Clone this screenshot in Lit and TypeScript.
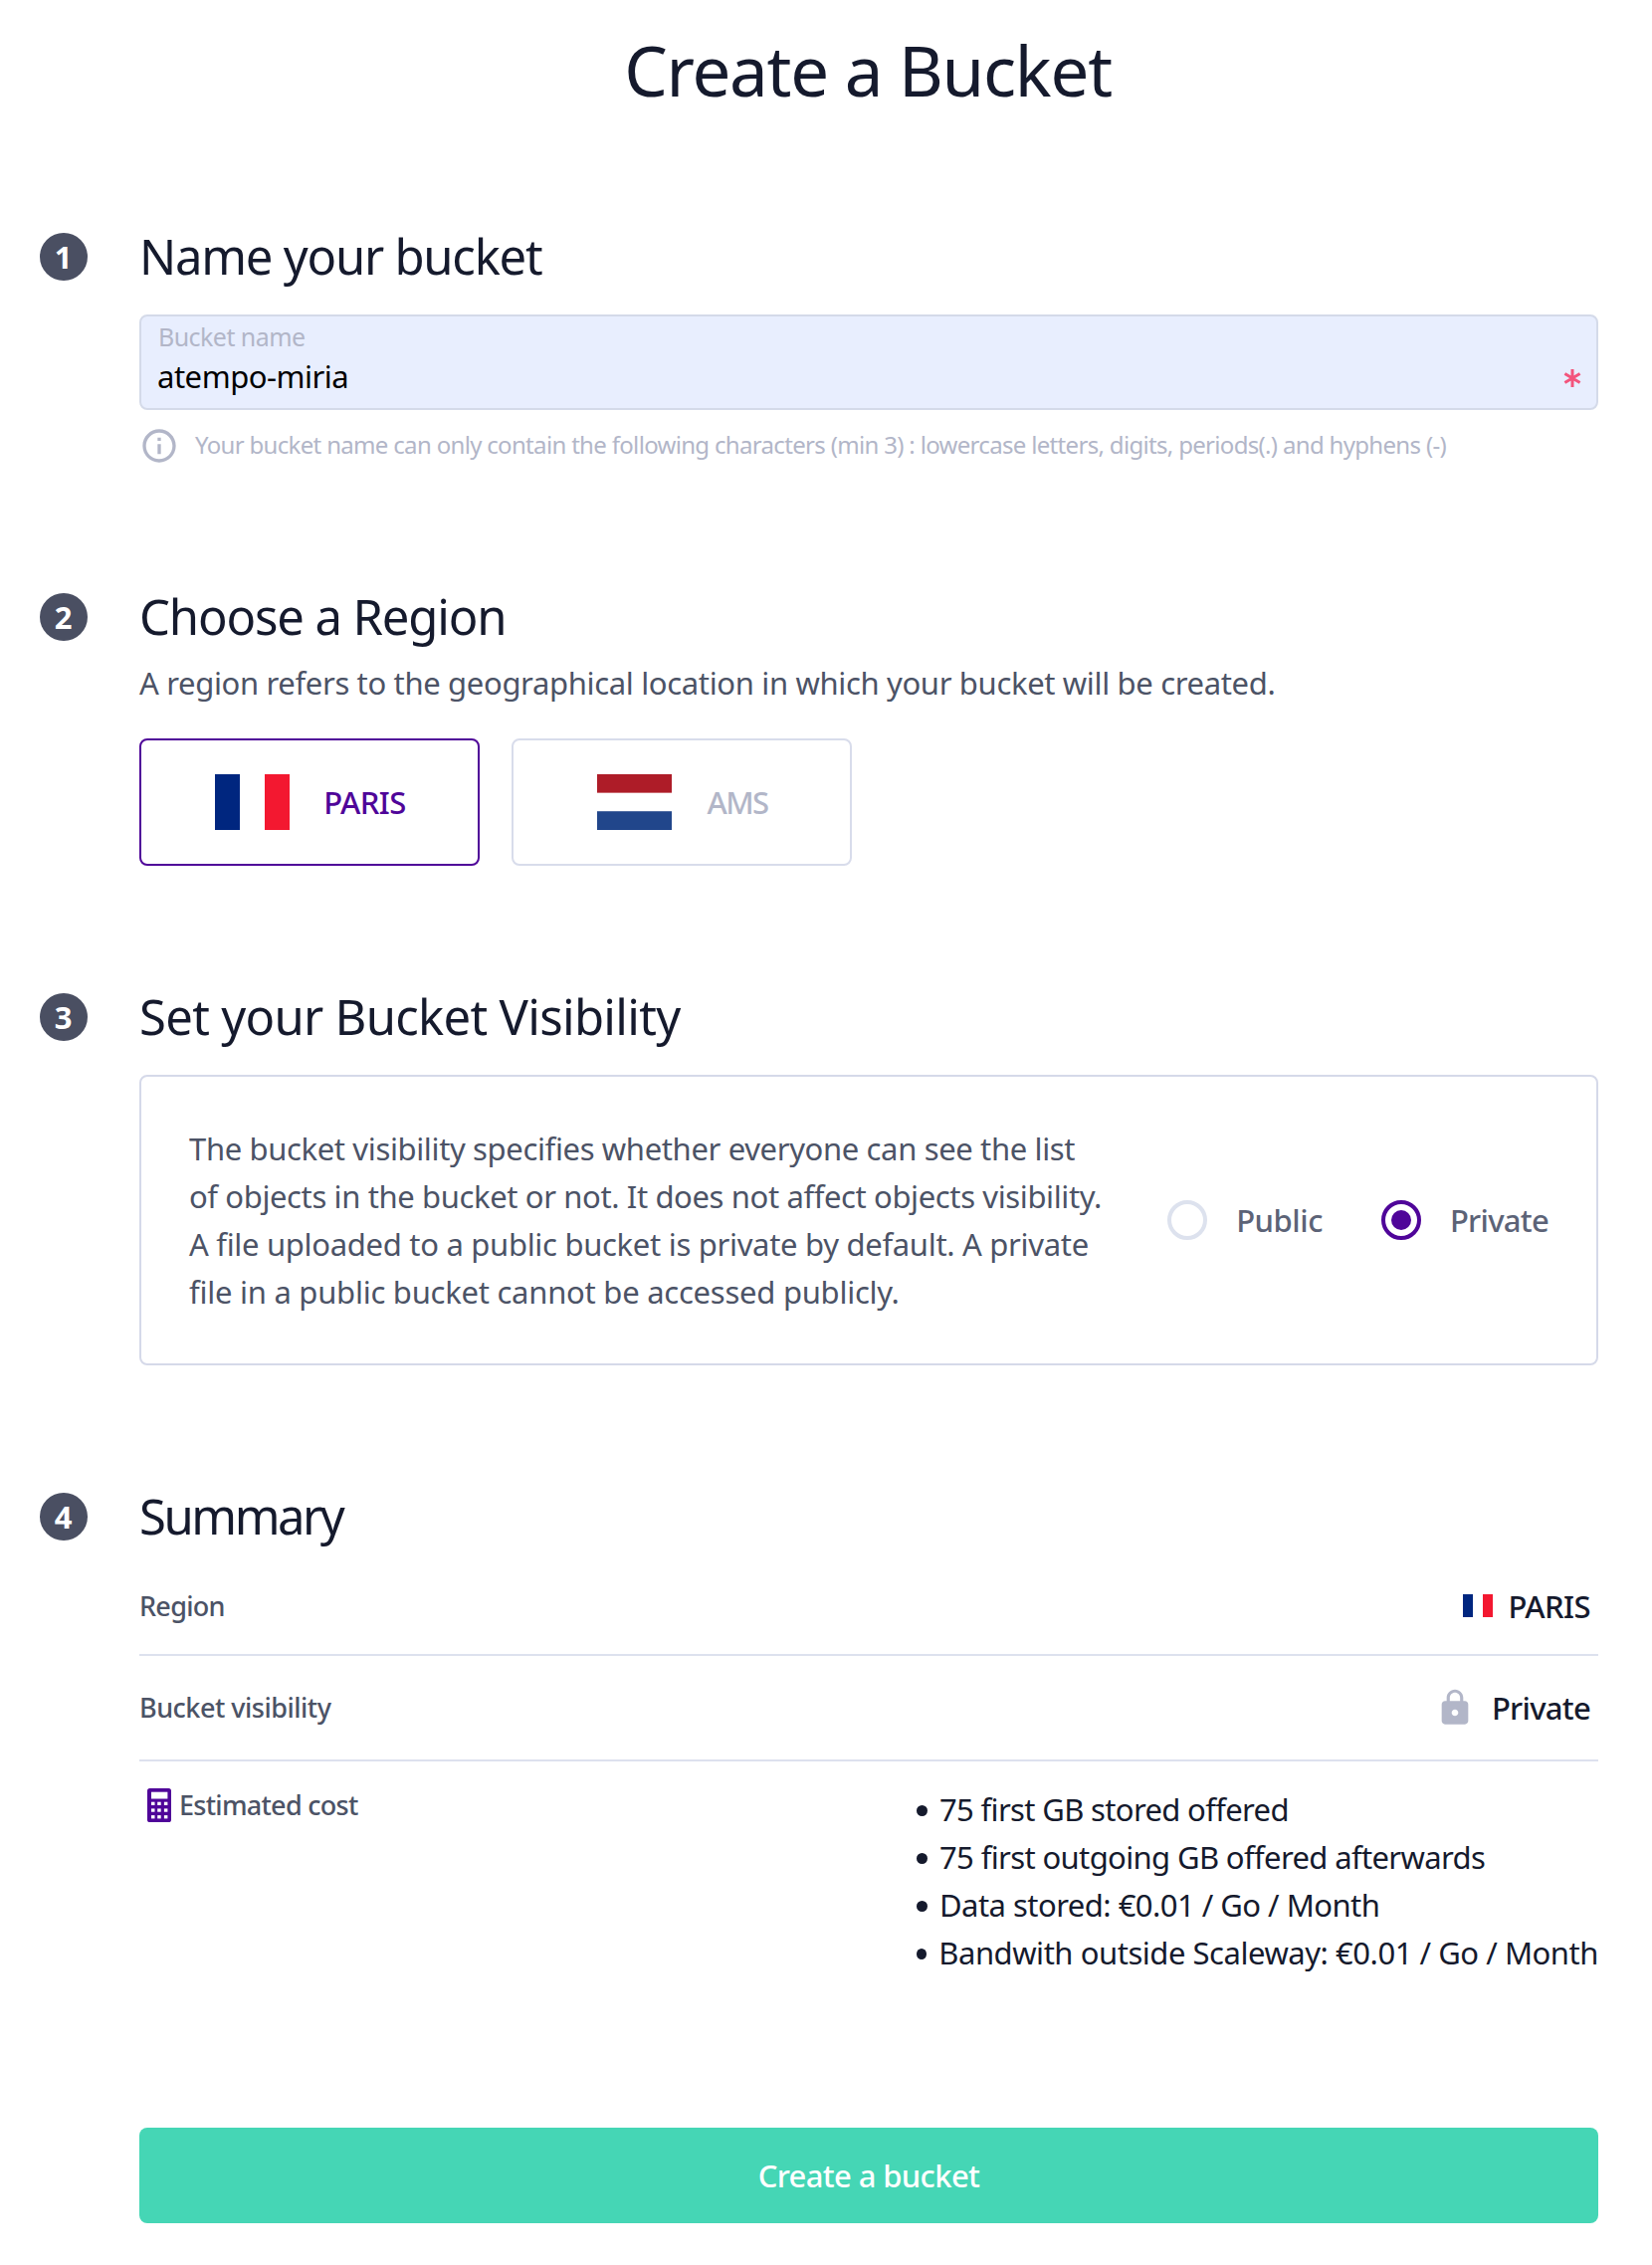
import { LitElement, html, css, svg } from 'lit';
import { customElement, property, state } from 'lit/decorators.js';
import { classMap } from 'lit/directives/class-map.js';

const flagFr = svg`<rect width="25" height="56" fill="#00267f"/><rect x="25" width="25" height="56" fill="#fff"/><rect x="50" width="25" height="56" fill="#f31830"/>`;
const flagNl = svg`<rect width="75" height="18.8" fill="#ae1c28"/><rect y="18.8" width="75" height="18.4" fill="#fff"/><rect y="37.2" width="75" height="18.8" fill="#21468b"/>`;

@customElement('form-step')
export class FormStep extends LitElement {
  @property({ type: Number }) step = 1;
  @property() heading = '';

  static styles = css`
    :host { display: grid; grid-template-columns: 100px 1fr; }
    .badge {
      display: flex; align-items: center; justify-content: center;
      width: 48px; height: 48px; margin-top: 7px; padding-right: 1px; border-radius: 50%; box-sizing: border-box;
      background: #4a4f62; color: #fff; font-size: 31px; font-weight: 700; line-height: 48px;
    }
    h2 { margin: 0; font-size: 49px; line-height: 60px; font-weight: 400; color: #151a2d; white-space: nowrap; }
    .h1 { letter-spacing: -1.24px; }
    .h2 { letter-spacing: -1.13px; }
    .h3 { letter-spacing: -0.7px; }
    .h4 { letter-spacing: -2.45px; }
  `;

  render() {
    return html`
      <div class="badge">${this.step}</div>
      <div>
        <h2 class="h${this.step}">${this.heading}</h2>
        <slot></slot>
      </div>`;
  }
}

@customElement('app-root')
export class AppRoot extends LitElement {
  @state() private region = 'PARIS';
  @state() private visibility = 'Private';

  static styles = css`
    :host {
      display: block; box-sizing: border-box; height: 2276px; padding: 24px 54px 0 40px;
      background: #fff; color: #4c5366;
      font-family: "Noto Sans", "Open Sans", sans-serif; font-size: 31px; line-height: 48px;
    }
    * { box-sizing: border-box; }
    svg { display: block; flex: none; }
    h1 {
      margin: 0 0 111px 98px; text-align: center; font-size: 69px; line-height: 92px;
      font-weight: 400; letter-spacing: -1.22px; color: #151a2d;
    }
    form-step { margin-bottom: 121px; }
    form-step:last-of-type { margin-bottom: 152px; }

    .field {
      height: 96px; margin-top: 29px; padding: 5px 15px 0 16px; border: 2px solid #d4dae9;
      border-radius: 8px; background: #e8eefe;
    }
    .label { padding-left: 1px; font-size: 25px; line-height: 30px; letter-spacing: -0.55px; color: #b2b6c8; }
    .entry { display: flex; justify-content: space-between; align-items: center; margin-top: 5px; }
    .value { line-height: 40px; letter-spacing: -0.48px; color: #000; }
    .required { margin-top: 4px; }
    .hint { display: flex; align-items: center; gap: 16px; height: 40px; margin-top: 16px; color: #b2b6c8; }
    .hint-text { padding-bottom: 2px; font-size: 24px; line-height: 34px; letter-spacing: -0.676px; white-space: nowrap; }

    .intro { margin: 13px 0 32px; letter-spacing: -0.343px; }
    .cards { display: flex; gap: 32px; }
    .card {
      display: flex; align-items: center; justify-content: center; gap: 34px;
      width: 342px; height: 128px; padding-left: 2px; border: 2px solid #d8dceb; border-radius: 8px;
      color: #b2b6c8; font-weight: 500; cursor: pointer;
    }
    .card.active { border-color: #4f0599; color: #4f0599; }
    .PARIS { letter-spacing: -0.55px; }
    .AMS { padding-left: 1px; letter-spacing: -1.6px; }

    .visibility {
      display: flex; align-items: center; justify-content: space-between;
      margin-top: 29px; padding: 48px; border: 2px solid #d5d9e9; border-radius: 8px;
    }
    .about { white-space: nowrap; }
    .line1 { letter-spacing: -0.36px; }
    .line2 { letter-spacing: -0.38px; }
    .line3 { letter-spacing: -0.3px; }
    .line4 { letter-spacing: -0.25px; }
    .radios { display: flex; gap: 59px; }
    .radio { display: flex; align-items: center; gap: 29px; color: #5c6377; font-weight: 500; cursor: pointer; }
    .Public { letter-spacing: -0.46px; }
    .Private { letter-spacing: -0.72px; }
    .dot {
      display: flex; align-items: center; justify-content: center;
      width: 40px; height: 40px; border: 4px solid #dde2ee; border-radius: 50%;
    }
    .dot.on { border-color: #4f0599; }
    .dot.on::after { content: ""; width: 20px; height: 20px; border-radius: 50%; background: #4f0599; }

    .row { display: flex; justify-content: space-between; align-items: center; border-bottom: 2px solid #dde1ee; }
    .row.first { height: 99px; margin-top: 12px; }
    .row.second { height: 106px; }
    .key { font-size: 27px; line-height: 38px; font-weight: 500; letter-spacing: -0.5px; }
    .row.first .key { letter-spacing: -0.7px; }
    .result { display: flex; align-items: center; gap: 15px; padding-right: 8px; color: #151a2d; font-weight: 500; }
    .row.second .result { gap: 17px; }
    .costs { display: flex; justify-content: space-between; align-items: flex-start; padding-top: 24px; }
    .cost-key { display: flex; align-items: center; gap: 8px; height: 39px; padding-left: 8px; }
    .cost-key .key { letter-spacing: -0.72px; }
    ul { width: 685px; margin: 0; padding: 0; list-style: none; color: #151a2d; letter-spacing: -0.53px; white-space: nowrap; }
    li { display: flex; align-items: center; gap: 12px; }
    li::before { content: ""; width: 11px; height: 11px; margin-top: 2px; border-radius: 50%; background: #151a2d; }
    li:first-child { letter-spacing: -0.65px; }
    li:nth-child(2) { letter-spacing: -0.63px; }
    li:last-child { letter-spacing: -0.46px; }

    .submit {
      display: block; width: 1466px; height: 96px; margin: 0 0 0 100px; padding: 0; border: 0; border-radius: 8px;
      background: #45d6b5; color: #fff; font: inherit; font-weight: 500; letter-spacing: -0.63px; cursor: pointer;
    }
  `;

  private card(name: string, flag: unknown) {
    return html`
      <div class=${classMap({ card: true, active: this.region === name })} @click=${() => (this.region = name)}>
        <svg width="75" height="56" viewBox="0 0 75 56">${flag}</svg>
        <span class=${name}>${name}</span>
      </div>`;
  }

  private radio(name: string) {
    return html`
      <div class="radio" @click=${() => (this.visibility = name)}>
        <span class=${classMap({ dot: true, on: this.visibility === name })}></span>
        <span class=${name}>${name}</span>
      </div>`;
  }

  render() {
    const keys = [13.7, 20.4, 27.1].flatMap((y) => [4, 10.2, 16.9].map((x) => svg`<rect x=${x} y=${y} width="3.5" height="3.3" fill="#fff"/>`));
    return html`
      <h1>Create a Bucket</h1>

      <form-step .step=${1} heading="Name your bucket">
        <div class="field">
          <div class="label">Bucket name</div>
          <div class="entry">
            <span class="value">atempo-miria</span>
            <svg class="required" width="18" height="20" viewBox="0 0 18 20" fill="none" stroke="#f3547c" stroke-width="3">
              <path d="M9 1v18M1.4 5.5l15.2 9M16.6 5.5l-15.2 9"/>
            </svg>
          </div>
        </div>
        <div class="hint">
          <svg width="40" height="40" viewBox="0 0 24 24" fill="#b2b6c8">
            <path d="M11 7h2v2h-2zm0 4h2v6h-2zm1-9C6.48 2 2 6.48 2 12s4.48 10 10 10 10-4.48 10-10S17.52 2 12 2zm0 18c-4.41 0-8-3.59-8-8s3.59-8 8-8 8 3.59 8 8-3.59 8-8 8z"/>
          </svg>
          <span class="hint-text">Your bucket name can only contain the following characters (min 3) : lowercase letters, digits, periods(.) and hyphens (-)</span>
        </div>
      </form-step>

      <form-step .step=${2} heading="Choose a Region">
        <p class="intro">A region refers to the geographical location in which your bucket will be created.</p>
        <div class="cards">${this.card('PARIS', flagFr)}${this.card('AMS', flagNl)}</div>
      </form-step>

      <form-step .step=${3} heading="Set your Bucket Visibility">
        <div class="visibility">
          <div class="about">
            <div class="line1">The bucket visibility specifies whether everyone can see the list</div>
            <div class="line2">of objects in the bucket or not. It does not affect objects visibility.</div>
            <div class="line3">A file uploaded to a public bucket is private by default. A private</div>
            <div class="line4">file in a public bucket cannot be accessed publicly.</div>
          </div>
          <div class="radios">${this.radio('Public')}${this.radio('Private')}</div>
        </div>
      </form-step>

      <form-step .step=${4} heading="Summary">
        <div class="row first">
          <span class="key">Region</span>
          <span class="result">
            <svg width="30" height="23" viewBox="0 0 75 56" preserveAspectRatio="none">${this.region === 'PARIS' ? flagFr : flagNl}</svg>
            <span class=${this.region}>${this.region}</span>
          </span>
        </div>
        <div class="row second">
          <span class="key">Bucket visibility</span>
          <span class="result">
            <svg width="40" height="40" viewBox="0 0 24 24" fill="#b2b6c8">
              <path d="M18 8h-1V6c0-2.76-2.24-5-5-5S7 3.24 7 6v2H6c-1.1 0-2 .9-2 2v10c0 1.1.9 2 2 2h12c1.1 0 2-.9 2-2V10c0-1.1-.9-2-2-2zm-6 9c-1.1 0-2-.9-2-2s.9-2 2-2 2 .9 2 2-.9 2-2 2zm3.1-9H8.9V6c0-1.71 1.39-3.1 3.1-3.1s3.1 1.39 3.1 3.1z"/>
            </svg>
            <span class=${this.visibility}>${this.visibility}</span>
          </span>
        </div>
        <div class="costs">
          <div class="cost-key">
            <svg width="24" height="34" viewBox="0 0 24 34">
              <rect width="24" height="34" rx="2.6" fill="#4f0599"/>
              <rect x="4" y="3.7" width="16.4" height="6.8" fill="#fff"/>
              ${keys}
            </svg>
            <span class="key">Estimated cost</span>
          </div>
          <ul>
            <li>75 first GB stored offered</li>
            <li>75 first outgoing GB offered afterwards</li>
            <li>Data stored: €0.01 / Go / Month</li>
            <li>Bandwith outside Scaleway: €0.01 / Go / Month</li>
          </ul>
        </div>
      </form-step>

      <button class="submit">Create a bucket</button>
    `;
  }
}
